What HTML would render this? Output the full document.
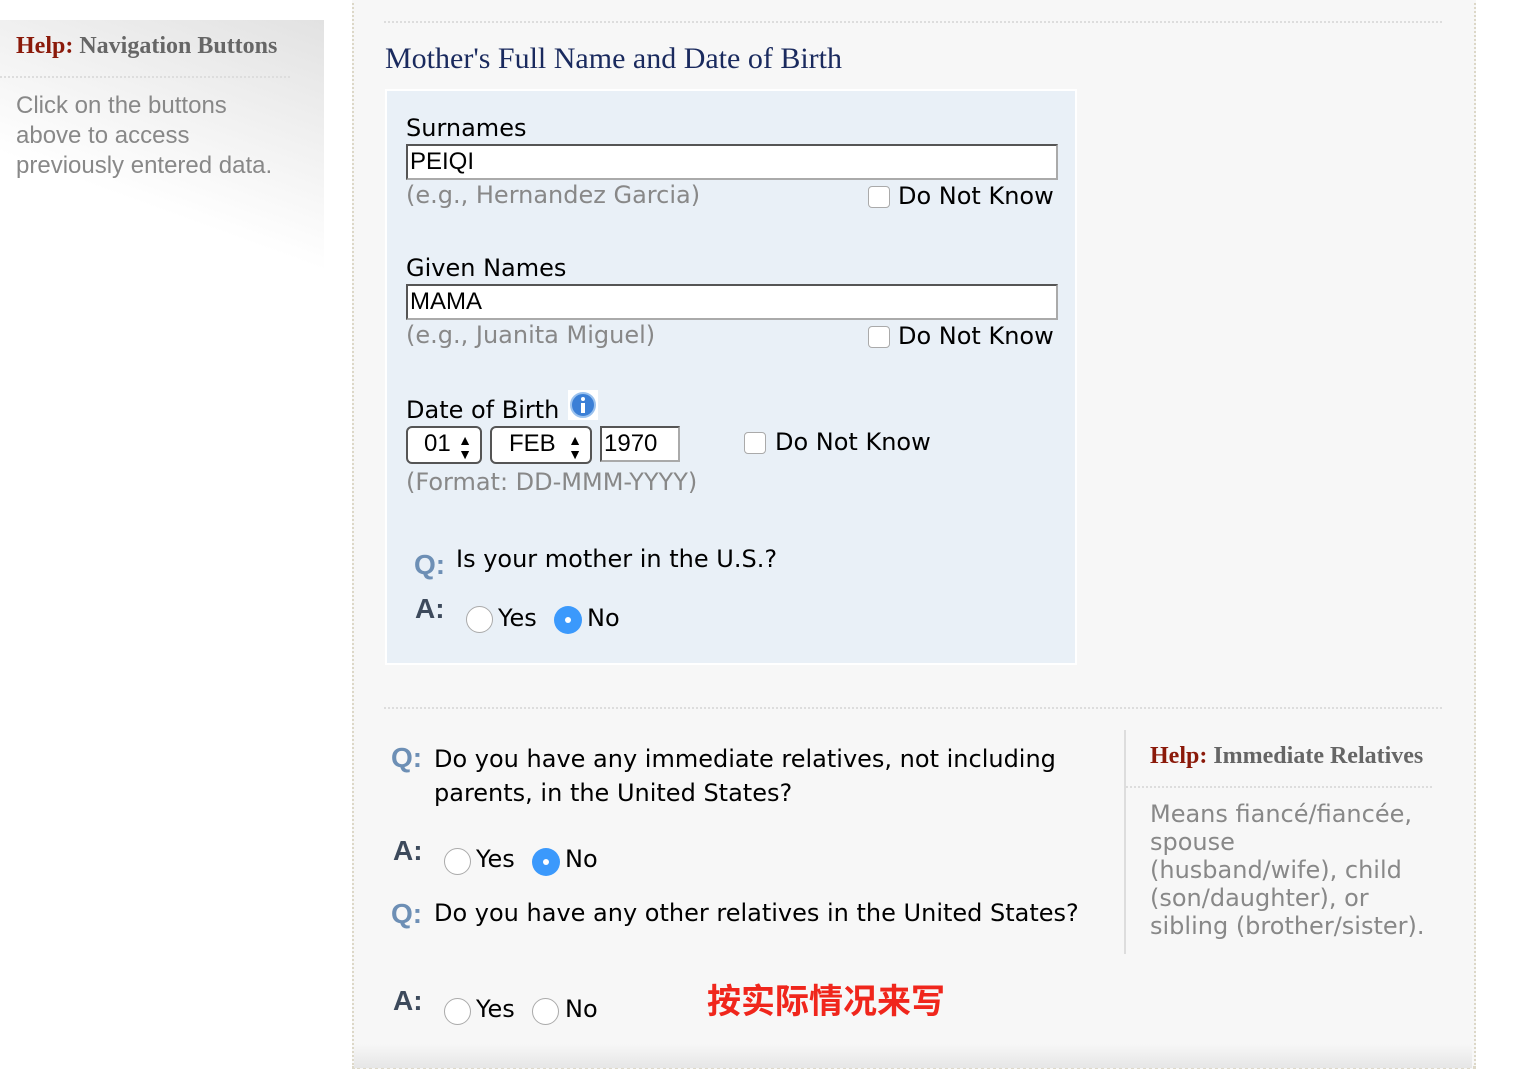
<!DOCTYPE html>
<html><head><meta charset="utf-8"><style>
body{margin:0;width:1518px;height:1072px;background:#fff;position:relative;overflow:hidden;font-family:"DejaVu Sans","Liberation Sans",sans-serif;}
.a{position:absolute;white-space:nowrap;}
.t{font-size:24px;color:#000;}
.g{font-size:24px;color:#888;}
.side{position:absolute;left:0;top:20px;width:324px;height:440px;background:linear-gradient(200deg,#e2e2e2 0%,#fff 45%,#fff 100%);}
.main{position:absolute;left:352px;top:-2px;width:1120px;height:1068px;background:#f7f7f7;border-left:2px dotted #ddd8c8;border-right:2px dotted #ddd8c8;border-bottom:3px dotted #ddd8c8;}
.hr{position:absolute;height:0;border-top:2px dotted #ddd;}
.box{position:absolute;left:385px;top:89px;width:692px;height:576px;background:#e9f0f7;border:2px solid #fff;box-sizing:border-box;}
.inp{position:absolute;background:#fff;border:2px solid #555;border-right-color:#aaa;border-bottom-color:#aaa;box-sizing:border-box;font-size:24px;font-family:"Liberation Sans",sans-serif;padding-left:2px;line-height:32px;}
.cb{position:absolute;width:22px;height:22px;border:1px solid #aaa;border-radius:4px;background:#fff;box-sizing:border-box;}
.rb{position:absolute;width:27px;height:27px;border:1px solid #aaa;border-radius:50%;background:#fff;box-sizing:border-box;}
.rs{position:absolute;width:28px;height:28px;border-radius:50%;background:#3b99fc;}
.rs:after{content:"";position:absolute;left:11px;top:11px;width:6px;height:6px;border-radius:50%;background:#fff;}
.sel{position:absolute;border:2px solid #555;border-radius:6px;background:#fff;box-sizing:border-box;font-size:24px;font-family:"Liberation Sans",sans-serif;line-height:32px;}
.ar{position:absolute;right:8px;top:0;font-size:14px;line-height:14px;padding-top:5px;}
.q{font-family:"Liberation Sans",sans-serif;font-weight:bold;font-size:28px;color:#6d8fb5;}
.an{font-family:"Liberation Sans",sans-serif;font-weight:bold;font-size:28px;color:#3d4a5c;}
.hl{font-family:"Liberation Serif",serif;font-weight:bold;font-size:24px;color:#666;}
.hl b{color:#8b1a0a;}
</style></head><body>
<div class="side"></div>
<div class="a hl" style="left:16px;top:33px;"><b>Help:</b> Navigation Buttons</div>
<div class="hr" style="left:0;top:76px;width:290px;"></div>
<div class="a" style="left:16px;top:91px;font-family:'Liberation Sans',sans-serif;font-size:24px;color:#888;line-height:30px;">Click on the buttons<br>above to access<br>previously entered data.</div>

<div class="main"></div>
<div class="hr" style="left:384px;top:21px;width:1058px;"></div>
<div class="a" style="left:385px;top:42px;font-family:'Liberation Serif',serif;font-size:30px;color:#1a2a5e;">Mother's Full Name and Date of Birth</div>
<div class="box"></div>

<div class="a t" style="left:406px;top:114px;">Surnames</div>
<div class="inp" style="left:406px;top:144px;width:652px;height:36px;">PEIQI</div>
<div class="a g" style="left:406px;top:181px;">(e.g., Hernandez Garcia)</div>
<div class="cb" style="left:868px;top:186px;"></div>
<div class="a t" style="left:898px;top:182px;">Do Not Know</div>

<div class="a t" style="left:406px;top:254px;">Given Names</div>
<div class="inp" style="left:406px;top:284px;width:652px;height:36px;">MAMA</div>
<div class="a g" style="left:406px;top:321px;">(e.g., Juanita Miguel)</div>
<div class="cb" style="left:868px;top:326px;"></div>
<div class="a t" style="left:898px;top:322px;">Do Not Know</div>

<div class="a t" style="left:406px;top:396px;">Date of Birth</div>
<svg class="a" style="left:568px;top:390px;" width="30" height="30"><rect width="30" height="30" fill="#fff"/><circle cx="15" cy="15" r="12" fill="#3b7fd6" stroke="#9bc2ee" stroke-width="2"/><circle cx="15" cy="9" r="2" fill="#fff"/><rect x="13" y="13" width="4" height="10" fill="#fff"/></svg>
<div class="sel" style="left:406px;top:426px;width:76px;height:38px;padding-left:16px;">01<span class="ar">▲<br>▼</span></div>
<div class="sel" style="left:490px;top:426px;width:102px;height:38px;padding-left:17px;">FEB<span class="ar">▲<br>▼</span></div>
<div class="inp" style="left:600px;top:426px;width:80px;height:36px;">1970</div>
<div class="cb" style="left:744px;top:432px;"></div>
<div class="a t" style="left:775px;top:428px;">Do Not Know</div>
<div class="a g" style="left:406px;top:468px;">(Format: DD-MMM-YYYY)</div>

<div class="a q" style="left:414px;top:549px;">Q:</div>
<div class="a t" style="left:456px;top:545px;">Is your mother in the U.S.?</div>
<div class="a an" style="left:415px;top:593px;">A:</div>
<div class="rb" style="left:466px;top:606px;"></div>
<div class="a t" style="left:498px;top:604px;">Yes</div>
<div class="rs" style="left:554px;top:606px;"></div>
<div class="a t" style="left:587px;top:604px;">No</div>

<div class="hr" style="left:384px;top:707px;width:1058px;"></div>
<div class="a q" style="left:391px;top:742px;">Q:</div>
<div class="a t" style="left:434px;top:742px;line-height:34px;">Do you have any immediate relatives, not including<br>parents, in the United States?</div>
<div class="a an" style="left:393px;top:835px;">A:</div>
<div class="rb" style="left:444px;top:848px;"></div>
<div class="a t" style="left:476px;top:845px;">Yes</div>
<div class="rs" style="left:532px;top:848px;"></div>
<div class="a t" style="left:565px;top:845px;">No</div>
<div class="a q" style="left:391px;top:898px;">Q:</div>
<div class="a t" style="left:434px;top:899px;">Do you have any other relatives in the United States?</div>
<div class="a an" style="left:393px;top:985px;">A:</div>
<div class="rb" style="left:444px;top:998px;"></div>
<div class="a t" style="left:476px;top:995px;">Yes</div>
<div class="rb" style="left:532px;top:998px;"></div>
<div class="a t" style="left:565px;top:995px;">No</div>
<div class="a" style="left:707px;top:974px;font-family:'Noto Sans CJK SC',sans-serif;font-weight:bold;font-size:34px;color:#f0261c;">按实际情况来写</div>

<div style="position:absolute;left:1124px;top:730px;width:2px;height:224px;background:#ddd;"></div>
<div class="a hl" style="left:1150px;top:743px;"><b>Help:</b> Immediate Relatives</div>
<div class="hr" style="left:1126px;top:786px;width:306px;"></div>
<div class="a" style="left:1150px;top:800px;font-size:24px;color:#888;line-height:28px;">Means fiancé/fiancée,<br>spouse<br>(husband/wife), child<br>(son/daughter), or<br>sibling (brother/sister).</div>
<div style="position:absolute;left:354px;top:1044px;width:1118px;height:24px;background:linear-gradient(#f7f7f7,#e6e6e6);"></div>
</body></html>
